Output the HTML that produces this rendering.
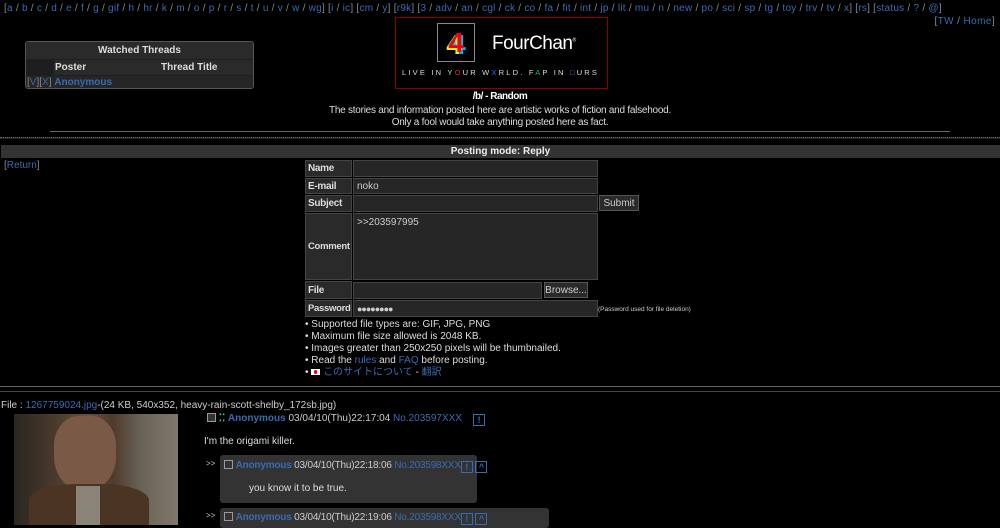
<!DOCTYPE html>
<html><head><meta charset="utf-8"><style>
*{margin:0;padding:0;box-sizing:border-box}
body{width:1000px;height:525px;overflow:hidden;background:#000;color:#ccc;font-family:"Liberation Sans","Noto Sans CJK JP",sans-serif;font-size:10px;position:relative}
a,.l{color:#3a6bb0;text-decoration:none}
.abs{position:absolute;white-space:nowrap}
.nav{color:#888}
.lab{position:absolute;left:305px;width:47px;background:#2a2a2a;border:1px solid #444;font-weight:bold;color:#ddd;padding-left:2px;display:flex;align-items:center;letter-spacing:-0.3px;font-size:10px}
.inp{position:absolute;left:353px;background:#262626;border:1px solid #444;color:#ccc;padding-left:3px;display:flex;align-items:center}
.btn{position:absolute;background:#2a2a2a;border:1px solid #555;color:#ccc;display:flex;align-items:center;justify-content:center}
.b{font-weight:bold}
.cb{display:inline-block;width:9px;height:9px;border:1px solid #999;background:#333;vertical-align:-1px}
.ic{display:inline-block;width:12px;height:12px;border:1px solid #3a6bb0;color:#3a6bb0;font-size:9px;font-weight:bold;line-height:10px;text-align:center;vertical-align:-2px}
</style></head><body>
<div class="abs nav" style="left:4px;top:3px;letter-spacing:0.25px">[<a>a</a> / <a>b</a> / <a>c</a> / <a>d</a> / <a>e</a> / <a>f</a> / <a>g</a> / <a>gif</a> / <a>h</a> / <a>hr</a> / <a>k</a> / <a>m</a> / <a>o</a> / <a>p</a> / <a>r</a> / <a>s</a> / <a>t</a> / <a>u</a> / <a>v</a> / <a>w</a> / <a>wg</a>] [<a>i</a> / <a>ic</a>] [<a>cm</a> / <a>y</a>] [<a>r9k</a>] [<a>3</a> / <a>adv</a> / <a>an</a> / <a>cgl</a> / <a>ck</a> / <a>co</a> / <a>fa</a> / <a>fit</a> / <a>int</a> / <a>jp</a> / <a>lit</a> / <a>mu</a> / <a>n</a> / <a>new</a> / <a>po</a> / <a>sci</a> / <a>sp</a> / <a>tg</a> / <a>toy</a> / <a>trv</a> / <a>tv</a> / <a>x</a>] [<a>rs</a>] [<a>status</a> / <a>?</a> / <a>@</a>]</div>
<div class="abs nav" style="right:5px;top:16px;letter-spacing:0.4px">[<a>TW</a> / <a>Home</a>]</div>

<div class="abs" style="left:25px;top:41px;width:229px;height:48px;border:1px solid #555;border-radius:3px;background:#1e1e1e;overflow:hidden">
<div style="height:17px;background:#2a2a2a;text-align:center;font-weight:bold;color:#ddd;line-height:17px">Watched Threads</div>
<div style="height:15px;margin:1px 0 0 28px;background:#2a2a2a;font-weight:bold;color:#ddd;line-height:15px;position:relative"><span style="position:absolute;left:1px">Poster</span><span style="position:absolute;left:107px">Thread Title</span></div>
<div style="height:14px;margin-top:1px;background:#262626;line-height:14px;padding-left:1px"><span class="nav">[<a>V</a>][<a>X</a>]</span> <a class="b">Anonymous</a></div>
</div>

<div class="abs" style="left:395px;top:17px;width:213px;height:72px;border:1px solid #8a0000;background:#000">
<div style="position:absolute;left:41px;top:5px;width:38px;height:39px;border:1px solid #888;color:#e02;font-size:28px;font-weight:bold;text-align:center;line-height:37px;text-shadow:-2px 2px #ee0,2px 2px #0bd">4</div>
<div style="position:absolute;left:96px;top:15px;font-size:19px;color:#fff;letter-spacing:-0.5px">FourChan<sup style="font-size:5px">®</sup></div>
<div style="position:absolute;left:6px;top:50px;font-size:7.5px;color:#ddd;letter-spacing:2.2px;white-space:nowrap">LIVE IN Y<span style="color:#d22">O</span>UR W<span style="color:#36f">X</span>RLD. F<span style="color:#2a9">A</span>P IN <span style="color:#a6c">□</span>URS</div>
</div>

<div class="abs b" style="left:0;width:1000px;top:91px;text-align:center;color:#fff;font-size:10px;letter-spacing:-0.5px">/b/ - Random</div>
<div class="abs" style="left:0;width:1000px;top:105px;text-align:center;color:#ddd;line-height:12px;letter-spacing:-0.25px">The stories and information posted here are artistic works of fiction and falsehood.<br>Only a fool would take anything posted here as fact.</div>
<div class="abs" style="left:50px;top:131px;width:900px;height:1px;background:#666"></div>
<div class="abs" style="left:0;top:137px;width:1000px;height:2px;border-top:1px dotted #666;background:#222"></div>
<div class="abs b" style="left:1px;top:145px;width:999px;height:13px;background:#333;text-align:center;line-height:13px;color:#eee">Posting mode: Reply</div>
<div class="abs nav" style="left:4px;top:160px">[<a>Return</a>]</div>

<div class="lab" style="top:160px;height:17px">Name</div><div class="inp" style="top:160px;width:245px;height:17px"></div>
<div class="lab" style="top:178px;height:16px">E-mail</div><div class="inp" style="top:178px;width:245px;height:16px">noko</div>
<div class="lab" style="top:195px;height:17px">Subject</div><div class="inp" style="top:195px;width:245px;height:17px"></div>
<div class="btn" style="left:599px;top:195px;width:40px;height:16px">Submit</div>
<div class="lab" style="top:213px;height:67px;font-size:9.5px">Comment</div><div class="inp" style="top:213px;width:245px;height:67px;align-items:flex-start;padding-top:3px">&gt;&gt;203597995</div>
<div class="lab" style="top:281px;height:18px">File</div><div class="inp" style="top:282px;width:189px;height:17px"></div>
<div class="btn" style="left:544px;top:282px;width:44px;height:16px">Browse...</div>
<div class="lab" style="top:300px;height:17px;font-size:9.5px">Password</div><div class="inp" style="top:300px;width:245px;height:17px;font-size:9px;letter-spacing:-1px">●●●●●●●●</div>
<div class="abs" style="left:598px;top:306px;font-size:6.5px">(Password used for file deletion)</div>
<div class="abs" style="left:305px;top:319px;line-height:12px;color:#ddd">• Supported file types are: GIF, JPG, PNG<br>• Maximum file size allowed is 2048 KB.<br>• Images greater than 250x250 pixels will be thumbnailed.<br>• Read the <a>rules</a> and <a>FAQ</a> before posting.<br>• <span style="display:inline-block;width:9px;height:6px;background:#fff;vertical-align:0;position:relative"><span style="position:absolute;left:3px;top:1px;width:3px;height:4px;border-radius:2px;background:#d00"></span></span> <a>このサイトについて</a> - <a>翻訳</a></div>

<div class="abs" style="left:0;top:386px;width:1000px;height:1px;background:#666"></div>
<div class="abs" style="left:0;top:391px;width:1000px;height:1px;background:#444"></div>

<div class="abs" style="left:1px;top:400px">File : <a>1267759024.jpg</a>-(24 KB, 540x352, heavy-rain-scott-shelby_172sb.jpg)</div>
<div class="abs" style="left:14px;top:414px;width:164px;height:111px;background:linear-gradient(90deg,#2a2620 0%,#4a3a2c 25%,#6a5040 45%,#4e3a2a 60%,#6a6458 78%,#80786a 100%)">
<div style="position:absolute;left:40px;top:2px;width:62px;height:74px;border-radius:40% 40% 45% 45%;background:#7a5a46"></div>
<div style="position:absolute;left:15px;top:70px;width:120px;height:41px;border-radius:40% 40% 0 0;background:#4a3424"></div>
<div style="position:absolute;left:62px;top:72px;width:24px;height:39px;background:#8a8478"></div>
</div>
<div class="abs" style="left:207px;top:413px"><span class="cb"></span> <span style="color:#3cc;font-weight:bold">⁚⁚</span> <a class="b">Anonymous</a> 03/04/10(Thu)22:17:04 <a>No.203597XXX</a> &nbsp; &nbsp;<span class="ic">!</span></div>
<div class="abs" style="left:204px;top:436px;color:#ddd">I'm the origami killer.</div>
<div class="abs" style="left:206px;top:459px;font-size:8px">&gt;&gt;</div>
<div class="abs" style="left:220px;top:455px;width:257px;height:48px;background:#333;border-radius:3px">
<div style="position:absolute;left:4px;top:5px;white-space:nowrap;letter-spacing:-0.2px"><span class="cb"></span> <a class="b">Anonymous</a> 03/04/10(Thu)22:18:06 <a>No.203598XXX</a><span class="ic">!</span> <span class="ic">^</span></div>
<div style="position:absolute;left:29px;top:28px;color:#ddd">you know it to be true.</div>
</div>
<div class="abs" style="left:206px;top:511px;font-size:8px">&gt;&gt;</div>
<div class="abs" style="left:220px;top:508px;width:329px;height:20px;background:#333;border-radius:3px">
<div style="position:absolute;left:4px;top:4px;white-space:nowrap;letter-spacing:-0.2px"><span class="cb"></span> <a class="b">Anonymous</a> 03/04/10(Thu)22:19:06 <a>No.203598XXX</a><span class="ic">!</span> <span class="ic">^</span></div>
</div>
</body></html>
